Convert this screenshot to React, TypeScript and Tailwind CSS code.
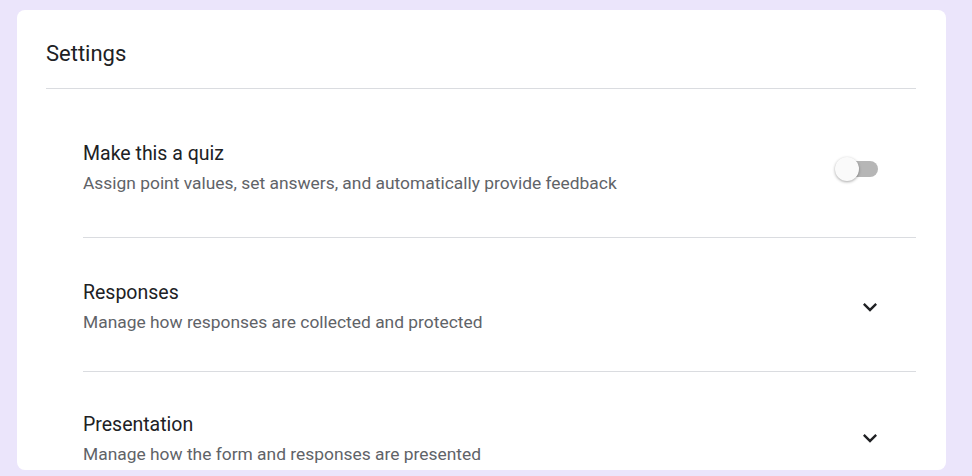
import { ReactNode } from "react";

interface SettingRowProps {
  title: string;
  description: string;
  action: ReactNode;
  className: string;
  last?: boolean;
}

function ExpandMore({ className = "" }: { className?: string }) {
  return (
    <svg width="28" height="28" viewBox="0 0 24 24" className={`mr-[32px] text-[#202124] ${className}`} fill="currentColor">
      <path d="M16.59 8.59L12 13.17 7.41 8.59 6 10l6 6 6-6z" />
    </svg>
  );
}

function Toggle() {
  return (
    <div className="relative mr-[37px] h-[24px] w-[44px]">
      <div className="absolute left-[2px] top-[4px] h-[16px] w-[41px] rounded-full bg-[#b6b6b6]" />
      <div className="absolute left-0 top-0 h-[24px] w-[24px] rounded-full bg-[#fafafa] shadow-[0_1px_3px_rgba(0,0,0,0.35)]" />
    </div>
  );
}

function SettingRow({ title, description, action, className, last }: SettingRowProps) {
  return (
    <div className={`flex items-center justify-between ${last ? "" : "border-b border-[#dadce0]"} ${className}`}>
      <div>
        <div className="text-[19.5px] leading-[24px] text-[#202124]">{title}</div>
        <div className="mt-[5px] text-[17.4px] leading-[24px] text-[#5f6368]">{description}</div>
      </div>
      {action}
    </div>
  );
}

export default function App() {
  return (
    <div className="h-[476px] overflow-hidden bg-[#ebe5fb] pl-[17px] pr-[26px] pt-[10px] font-['Roboto',sans-serif]">
      <div className="rounded-lg bg-white pl-[29px] pr-[30px]">
        {/* Header */}
        <div className="border-b border-[#dadce0] pb-[20px] pt-[30px]">
          <h2 className="text-[22px] leading-[28px] text-[#202124]">Settings</h2>
        </div>

        {/* Rows */}
        <div className="pl-[37px]">
          <SettingRow
            title="Make this a quiz"
            description="Assign point values, set answers, and automatically provide feedback"
            action={<Toggle />}
            className="pb-[42px] pt-[53px]"
          />
          <SettingRow
            title="Responses"
            description="Manage how responses are collected and protected"
            action={<ExpandMore className="-mt-[2px]" />}
            className="pb-[37px] pt-[43px]"
          />
          <SettingRow
            title="Presentation"
            description="Manage how the form and responses are presented"
            action={<ExpandMore className="-mt-[4px]" />}
            className="pb-[4px] pt-[41px]"
            last
          />
        </div>
      </div>
    </div>
  );
}
